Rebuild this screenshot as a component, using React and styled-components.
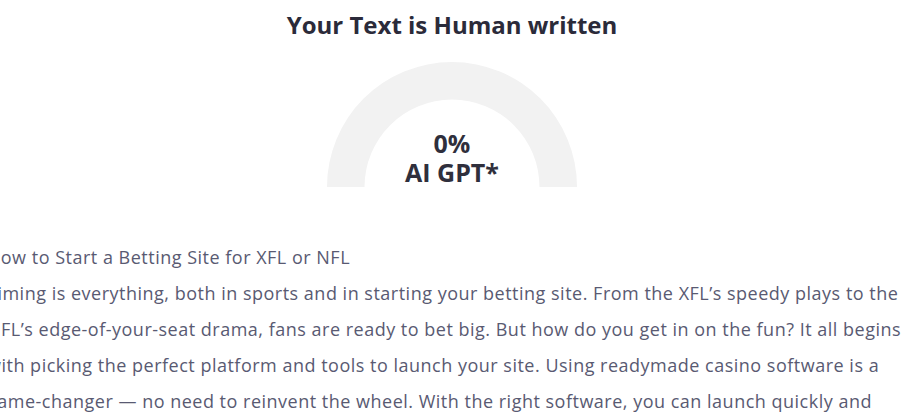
import React from "react";
import styled, { createGlobalStyle } from "styled-components";

const GlobalStyle = createGlobalStyle`
  html, body {
    margin: 0;
    padding: 0;
    background: #ffffff;
    overflow: hidden;
  }
`;

const Page = styled.div`
  width: 926px;
  margin-left: -11px;
  display: flex;
  flex-direction: column;
  align-items: center;
  font-family: "Open Sans", "Noto Sans", sans-serif;
`;

const Title = styled.h2`
  margin: 10px 0 0;
  font-size: 24px;
  line-height: 29px;
  font-weight: 700;
  color: #2b2b3a;
`;

const Gauge = styled.div`
  position: relative;
  width: 250px;
  height: 125px;
  margin-top: 23px;
`;

const GaugeLabel = styled.div`
  position: absolute;
  left: 0;
  right: 0;
  bottom: 0;
  text-align: center;
  font-size: 25px;
  line-height: 29px;
  font-weight: 700;
  color: #2f2f3c;
`;

const Body = styled.div`
  align-self: stretch;
  margin: 52px 0 0 -2px;
  font-size: 18px;
  line-height: 36px;
  letter-spacing: 0.5px;
  color: #595a72;
`;

const Heading = styled.div``;

const Paragraph = styled.p`
  margin: 0;
`;

const App = () => {
  return (
    <>
      <GlobalStyle />
      <Page>
        <Title>Your Text is Human written</Title>
        <Gauge>
          <svg width="250" height="125" viewBox="0 0 250 125">
            <path
              d="M0 125 A125 125 0 0 1 250 125 L212.5 125 A87.5 87.5 0 0 0 37.5 125 Z"
              fill="#f2f2f2"
            />
          </svg>
          <GaugeLabel>
            0%
            <br />
            AI GPT*
          </GaugeLabel>
        </Gauge>
        <Body>
          <Heading>How to Start a Betting Site for XFL or NFL</Heading>
          <Paragraph>
            Timing is everything, both in sports and in starting your betting site. From the XFL’s
            speedy plays to the NFL’s edge-of-your-seat drama, fans are ready to bet big. But how do
            you get in on the fun? It all begins with picking the perfect platform and tools to
            launch your site. Using readymade casino software is a game-changer — no need to
            reinvent the wheel. With the right software, you can launch quickly and confidently,
            ready to take bets from day one.
          </Paragraph>
        </Body>
      </Page>
    </>
  );
};

export default App;
